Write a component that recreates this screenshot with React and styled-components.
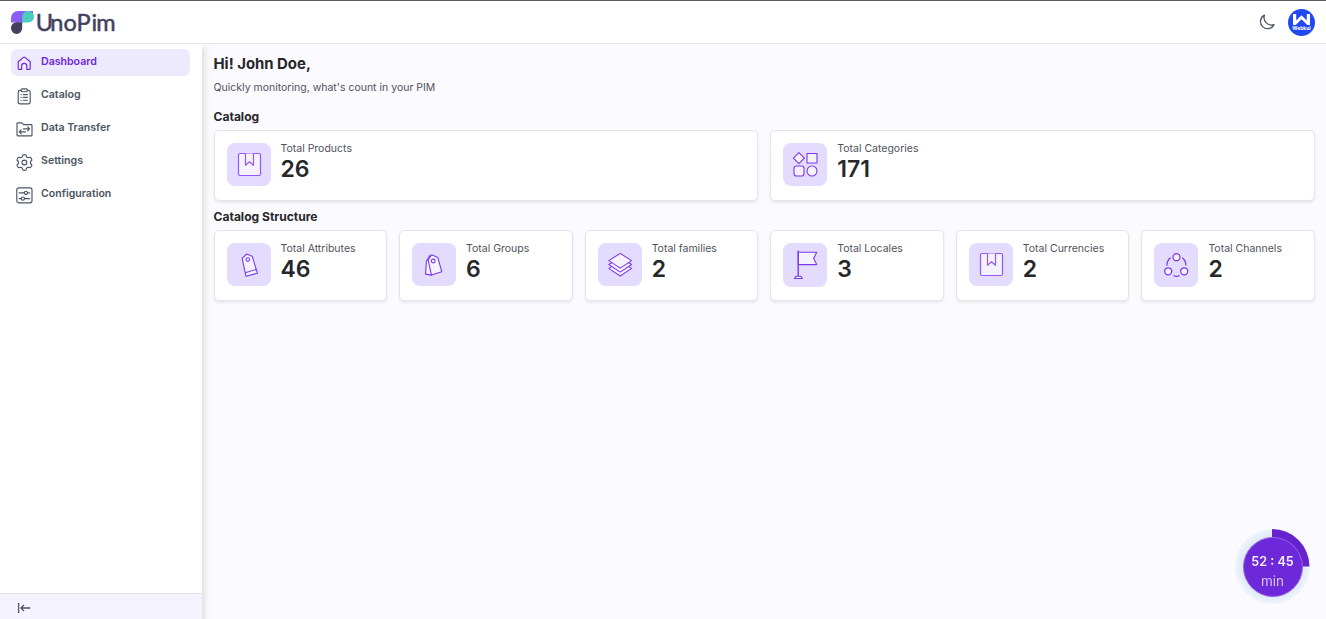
import React from "react";
import styled, { createGlobalStyle } from "styled-components";

const GlobalStyle = createGlobalStyle`
  *, *::before, *::after { box-sizing: border-box; }
  body {
    margin: 0;
    font-family: Inter, "Liberation Sans", sans-serif;
    background: #fbfaff;
    color: #27272a;
  }
  h1, h2, p { margin: 0; }
  svg { display: block; flex: none; }
`;

const Page = styled.div`
  display: flex;
  flex-direction: column;
  width: 100%;
  height: 100vh;
  overflow: hidden;
  border-top: 1px solid #5d5d61;
`;

const Header = styled.header`
  display: flex;
  flex: none;
  align-items: center;
  justify-content: space-between;
  height: 43px;
  padding: 0 11px;
  background: #fff;
  border-bottom: 1px solid #e4e5ec;
`;

const Brand = styled.a`
  display: flex;
  align-items: center;
`;

const HeaderActions = styled.div`
  display: flex;
  align-items: center;
  gap: 13px;
`;

const Body = styled.div`
  display: flex;
  flex: 1;
  min-height: 0;
`;

const Sidebar = styled.aside`
  display: flex;
  flex: none;
  flex-direction: column;
  justify-content: space-between;
  width: 202px;
  background: #fff;
  box-shadow: 0 5px 7px 2px rgba(0, 0, 0, 0.14);
  clip-path: inset(0 -14px 0 0);
`;

const Nav = styled.nav`
  display: grid;
  gap: 6px;
  padding: 5px 12px 0 11px;
`;

const NavItem = styled.a`
  display: flex;
  gap: 8px;
  height: 27px;
  padding: 5px 5px 0;
  border-radius: 6px;
  font-size: 10.58px;
  font-weight: 600;
  line-height: 15px;
  color: ${(p) => (p.$active ? "#6d28d9" : "#4b5563")};
  background: ${(p) => (p.$active ? "#ede9fe" : "transparent")};

  svg { margin-top: 1px; }
`;

const Collapse = styled.div`
  display: flex;
  align-items: center;
  height: 26px;
  padding: 3px 17px 0;
  border-top: 1px solid #e2e2ea;
  background: #f5f3ff;
`;

const Main = styled.main`
  flex: 1;
  padding: 11px 11px 0 11.5px;
`;

const Title = styled.h1`
  font-size: 14.9px;
  font-weight: 700;
  line-height: 18px;
`;

const Intro = styled.p`
  margin-top: 7px;
  font-size: 10.5px;
  line-height: 16px;
  color: #52525b;
`;

const SectionTitle = styled.h2`
  margin-top: ${(p) => p.$top}px;
  font-size: 12.05px;
  font-weight: 700;
  line-height: 16px;
`;

const CardGrid = styled.div`
  display: grid;
  grid-template-columns: repeat(${(p) => p.$columns}, 1fr);
  gap: 12px;
  margin-top: 5px;
`;

const Card = styled.article`
  display: flex;
  gap: 10px;
  height: 71px;
  padding: 12px;
  background: #fff;
  border: 1px solid #e4e4ec;
  border-radius: 5px;
  box-shadow: 0 2px 3px rgba(0, 0, 0, 0.07);
`;

const IconTile = styled.div`
  display: flex;
  flex: none;
  align-items: center;
  justify-content: center;
  width: 44px;
  height: ${(p) => (p.$tall ? 44 : 43)}px;
  border-radius: 8px;
  background: #e3dcfe;
`;

const Label = styled.p`
  font-size: 10.5px;
  line-height: 11px;
  color: #52525b;
`;

const Value = styled.p`
  margin-top: 1px;
  font-size: 23px;
  font-weight: 600;
  line-height: 28px;
`;

const TimerWidget = styled.div`
  position: fixed;
  right: 16px;
  bottom: 15px;
  width: 75px;
  height: 75px;
  border-radius: 50%;
  background: radial-gradient(circle, #dfeaf7 30px, #eef4fc 37px);
`;

const TimerArc = styled.svg`
  position: absolute;
  inset: 0;
`;

const TimerFace = styled.div`
  position: absolute;
  top: 8px;
  left: 8px;
  display: flex;
  flex-direction: column;
  align-items: center;
  width: 60px;
  height: 60px;
  padding: 16px 1px 0 0;
  border: 1px solid #9562e5;
  border-radius: 50%;
  background: #6d28d9;
  color: #f4eefd;
`;

const TimerClock = styled.span`
  font-size: 12.6px;
  font-weight: 600;
  line-height: 16px;
  white-space: nowrap;
`;

const TimerUnit = styled.span`
  margin-top: 2px;
  font-size: 13.5px;
  line-height: 18px;
  color: #d9c6f7;
`;

function LogoMark() {
  return (
    <svg width="24" height="23" viewBox="0 0 24 23">
      <path d="M7 0H22V6L11.5 11.5H0V7A7 7 0 0 1 7 0Z" fill="#8b5cf6" />
      <path d="M16.7 0H17.3A5.7 5.7 0 0 1 17.3 11.4H11.2V5.7A5.6 5.6 0 0 1 16.7 0Z" fill="#4bcbbd" />
      <path d="M5.5 11.3H11.2V17.3A5.6 5.6 0 0 1 0 17.3V17A5.6 5.6 0 0 1 5.5 11.3Z" fill="#434060" />
    </svg>
  );
}

const Wordmark = styled.svg`
  text {
    font-family: Lato, sans-serif;
    font-size: 23.5px;
    fill: #434060;
    stroke: #434060;
    stroke-width: 0.5px;
    stroke-linejoin: round;
  }
`;

const NavSvg = ({ children }) => (
  <svg width="17" height="17" viewBox="0 0 17 17" fill="none" stroke="currentColor" strokeWidth="1.15" strokeLinecap="round" strokeLinejoin="round">
    {children}
  </svg>
);

const navIcons = {
  home: (
    <NavSvg>
      <path d="M2.2 6.8L7.4 2.4Q8.2 1.8 9 2.4L14.2 6.8V13.4Q14.2 14.4 13.2 14.4H10.8V11A2.6 2.6 0 0 0 5.6 11V14.4H3.2Q2.2 14.4 2.2 13.4Z" />
    </NavSvg>
  ),
  clipboard: (
    <NavSvg>
      <path d="M5 2.4H4A1.8 1.8 0 0 0 2.2 4.2V14A1.8 1.8 0 0 0 4 15.8H12.4A1.8 1.8 0 0 0 14.2 14V4.2A1.8 1.8 0 0 0 12.4 2.4H11.4" />
      <rect x="5" y="0.9" width="6.4" height="2.8" rx="1.2" />
      <path d="M5 6.6H5.2M7.2 6.6H11.4M5 9.4H5.2M7.2 9.4H11.4M5 12.2H5.2M7.2 12.2H11.4" />
    </NavSvg>
  ),
  transfer: (
    <NavSvg>
      <path d="M1.8 1.8H5.4Q6 1.8 6.4 2.3L7.6 3.6H15.2Q16 3.6 16 4.4V14Q16 14.8 15.2 14.8H1.8Q1 14.8 1 14V2.6Q1 1.8 1.8 1.8Z" />
      <path d="M7.4 7.8H13.6M11.6 5.8L13.6 7.8L11.6 9.8M9.4 10.9H3.2M5.2 8.9L3.2 10.9L5.2 12.9" />
    </NavSvg>
  ),
  gear: (
    <NavSvg>
      <path d="M6.8 1.1Q8.4 0.3 10 1.1L10.6 3L12.1 3.8L14.1 3.3Q15.6 4.3 15.9 6L14.5 7.6V9.4L15.9 11Q15.6 12.7 14.1 13.7L12.1 13.2L10.6 14L10 15.9Q8.4 16.7 6.8 15.9L6.2 14L4.7 13.2L2.7 13.7Q1.2 12.7 1 11L2.4 9.4V7.6L1 6Q1.2 4.3 2.7 3.3L4.7 3.8L6.2 3Z" />
      <circle cx="8.4" cy="8.5" r="2.4" />
    </NavSvg>
  ),
  sliders: (
    <NavSvg>
      <rect x="0.8" y="0.8" width="15.2" height="15" rx="2" />
      <path d="M3.2 5.8H8M11.8 5.8H13.6M3.2 11.6H5M8.8 11.6H13.6" />
      <circle cx="9.9" cy="5.8" r="1.6" />
      <circle cx="6.9" cy="11.6" r="1.6" />
    </NavSvg>
  ),
};

const TileSvg = ({ children }) => (
  <svg width="32" height="32" viewBox="0 0 32 32" fill="#f5f2ff" stroke="#7c3aed" strokeWidth="1.1" strokeLinejoin="round">
    {children}
  </svg>
);

const tileIcons = {
  product: (
    <TileSvg>
      <rect x="5.5" y="4.5" width="22" height="22" rx="1.5" stroke="#9557f5" strokeWidth="1.2" />
      <path d="M12.5 4.5V16.2L16.5 12.8L20.5 16.2V4.5" stroke="#9557f5" strokeWidth="1.2" />
    </TileSvg>
  ),
  categories: (
    <TileSvg>
      <path d="M9.9 3.7L15.4 9.2L9.9 14.7L4.4 9.2Z" />
      <rect x="18" y="4.5" width="10" height="9.5" />
      <rect x="5" y="17" width="10" height="10" rx="2.6" />
      <circle cx="23" cy="22" r="5" />
    </TileSvg>
  ),
  tag: (
    <TileSvg>
      <path d="M9.2 9.4L13.6 5L19.2 7.2L24.4 24.2L13 27.3Z" />
      <path d="M12.2 23.7L23.3 20.4" />
      <circle cx="14.8" cy="10.6" r="1.8" />
    </TileSvg>
  ),
  tags: (
    <TileSvg>
      <path d="M12 6.3L8.4 12.4L7.5 25.1L13.8 26.1Z" />
      <path d="M10.2 10.8L13.7 5.7L19.8 8.4L23.8 22.8L13.4 26.1Z" />
      <circle cx="15.2" cy="12" r="1.9" />
    </TileSvg>
  ),
  layers: (
    <TileSvg>
      <path d="M4.8 19.4L16.2 12.4L27.6 19.4L16.2 27Z" />
      <path d="M4.8 15.5L16.2 8.5L27.6 15.5L16.2 23.1Z" />
      <path d="M4.8 11.6L16.2 4.4L27.6 11.6L16.2 19.1Z" />
    </TileSvg>
  ),
  flag: (
    <TileSvg>
      <path d="M9.3 3.3H27.7L24.7 9.5L27.7 15.6H9.3Z" />
      <path d="M9.2 1.5V27.2" fill="none" strokeWidth="1.4" />
      <path d="M7.2 27.2H11.6L13.4 29.5H5.4Z" />
    </TileSvg>
  ),
  channels: (
    <TileSvg>
      <g strokeWidth="1.3">
        <path d="M10.4 8.8C8.1 10.7 7 13.4 6.8 16.6M22.4 8.8C24.7 10.7 25.9 13.4 26 16.6M13.6 26.7C15.4 27.5 17.7 27.5 19.5 26.7" fill="none" />
        <circle cx="16.5" cy="8.2" r="3.5" />
        <circle cx="8.2" cy="22.3" r="3.5" />
        <circle cx="24.2" cy="22.3" r="3.5" />
      </g>
    </TileSvg>
  ),
};

const AvatarBadge = styled.div`
  display: flex;
  flex-direction: column;
  align-items: center;
  width: 27px;
  height: 27px;
  padding-top: 5px;
  border-radius: 50%;
  background: #2149f3;
  color: #fff;
  font-size: 5px;
  font-weight: 700;
  line-height: 6px;
`;

const navigation = [
  { label: "Dashboard", icon: "home", active: true },
  { label: "Catalog", icon: "clipboard" },
  { label: "Data Transfer", icon: "transfer" },
  { label: "Settings", icon: "gear" },
  { label: "Configuration", icon: "sliders" },
];

const catalog = [
  { label: "Total Products", value: 26, icon: "product" },
  { label: "Total Categories", value: 171, icon: "categories" },
];

const structure = [
  { label: "Total Attributes", value: 46, icon: "tag" },
  { label: "Total Groups", value: 6, icon: "tags" },
  { label: "Total families", value: 2, icon: "layers" },
  { label: "Total Locales", value: 3, icon: "flag", tall: true },
  { label: "Total Currencies", value: 2, icon: "product" },
  { label: "Total Channels", value: 2, icon: "channels", tall: true },
];

function StatCard({ label, value, icon, tall }) {
  return (
    <Card>
      <IconTile $tall={tall}>{tileIcons[icon]}</IconTile>
      <div>
        <Label>{label}</Label>
        <Value>{value}</Value>
      </div>
    </Card>
  );
}

export default function App() {
  return (
    <>
      <GlobalStyle />
      <Page>
        <Header>
          <Brand>
            <LogoMark />
            <Wordmark width="90" height="36" viewBox="0 0 90 36">
              <text x="0.8 15.2 28.6 41.6 56.4 61.2" y="27">UnoPim</text>
            </Wordmark>
          </Brand>
          <HeaderActions>
            <svg width="16" height="16" viewBox="0 0 16 16" fill="none" stroke="#4b5563" strokeWidth="1.3" strokeLinejoin="round">
              <path d="M5.4 1.2A7.1 7.1 0 1 0 15 10.6A7.5 7.5 0 0 1 5.4 1.2Z" />
            </svg>
            <AvatarBadge>
              <svg width="17" height="11" viewBox="0 0 17 11" fill="#fff">
                <path d="M0 0H3.2V6.5L8.5 1.2L13.8 6.5V0H17V11H14.3L8.5 5.2L2.7 11H0Z" />
              </svg>
              Webkul
            </AvatarBadge>
          </HeaderActions>
        </Header>
        <Body>
          <Sidebar>
            <Nav>
              {navigation.map((item) => (
                <NavItem key={item.label} $active={item.active}>
                  {navIcons[item.icon]}
                  {item.label}
                </NavItem>
              ))}
            </Nav>
            <Collapse>
              <svg width="14" height="12" viewBox="0 0 14 12" fill="none" stroke="#4b5563" strokeWidth="1.3">
                <path d="M1.6 1V11M13.3 6H4M7 3L4 6L7 9" />
              </svg>
            </Collapse>
          </Sidebar>
          <Main>
            <Title>Hi! John Doe,</Title>
            <Intro>Quickly monitoring, what's count in your PIM</Intro>
            <SectionTitle $top={13}>Catalog</SectionTitle>
            <CardGrid $columns={2}>
              {catalog.map((item) => <StatCard key={item.label} {...item} />)}
            </CardGrid>
            <SectionTitle $top={8}>Catalog Structure</SectionTitle>
            <CardGrid $columns={6}>
              {structure.map((item) => <StatCard key={item.label} {...item} />)}
            </CardGrid>
          </Main>
        </Body>
        <TimerWidget>
          <TimerArc width="75" height="75" viewBox="0 0 75 75">
            <path d="M37 37.5V0A37.5 37.5 0 0 1 74.5 37.5Z" fill="#6622cd" />
          </TimerArc>
          <TimerFace>
            <TimerClock>52 : 45</TimerClock>
            <TimerUnit>min</TimerUnit>
          </TimerFace>
        </TimerWidget>
      </Page>
    </>
  );
}
